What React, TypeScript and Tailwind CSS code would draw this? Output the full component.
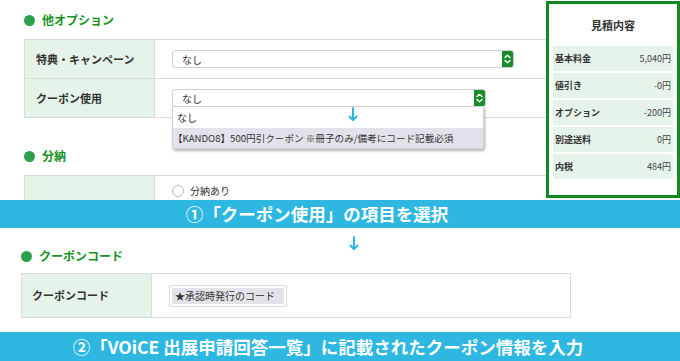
import React from "react";

const jp = { fontFamily: '"Noto Sans CJK JP", "Noto Sans", sans-serif' };

const Heading = ({ title }: { title: string }) => (
    <div className="flex items-center h-[12px] gap-[7px]">
        <span className="w-[11px] h-[11px] rounded-full bg-[#2f9e4c]" />
        <span className="text-[12px] font-bold text-[#17921f] leading-none">{title}</span>
    </div>
);

const Chevrons = () => (
    <svg width="7" height="10" viewBox="0 0 7 10" fill="none" stroke="white" strokeWidth="1.4" strokeLinecap="round" strokeLinejoin="round">
        <polyline points="1,3.5 3.5,1.2 6,3.5" />
        <polyline points="1,6.5 3.5,8.8 6,6.5" />
    </svg>
);

const Select = ({ width }: { width: string }) => (
    <div className={`${width} h-[18px] rounded-[3px] border border-[#cfcfcf] bg-white flex items-center justify-between overflow-hidden`}>
        <span className="pl-[9px] text-[10px] text-[#333]">なし</span>
        <span className="w-[11px] h-full bg-[#1a8c2b] flex items-center justify-center">
            <Chevrons />
        </span>
    </div>
);

const DownArrow = () => (
    <svg width="10" height="15" viewBox="0 0 10 15" fill="none" stroke="#29b6e3" strokeWidth="2" strokeLinecap="round" strokeLinejoin="round">
        <line x1="5" y1="1" x2="5" y2="13" />
        <polyline points="1.5,9.5 5,13 8.5,9.5" />
    </svg>
);

const Row = ({ label, children, top }: { label: string; children?: React.ReactNode; top?: boolean }) => (
    <div className="flex h-[39px] border-b border-[#dcdcdc]">
        <div className="w-[130px] shrink-0 bg-[#e5f3e9] border-r border-[#dcdcdc] flex items-center pl-[11px] text-[11px] font-bold text-[#333]">
            {label}
        </div>
        <div className={`flex-1 flex pl-[17px] ${top ? "items-start pt-[8px]" : "items-center"}`}>{children}</div>
    </div>
);

const estimate = [
    ["基本料金", "5,040円"],
    ["値引き", "-0円"],
    ["オプション", "-200円"],
    ["別途送料", "0円"],
    ["内税", "484円"],
];

export default function App() {
    return (
        <div className="w-[680px] h-[361px] bg-white overflow-hidden relative" style={jp}>
            <div className="flex h-[200px] overflow-hidden">
                <div className="flex-1 pl-[24px] pt-[14px]">
                    <Heading title="他オプション" />
                    <div className="mt-[13px] border-t border-l border-[#dcdcdc]">
                        <Row label="特典・キャンペーン">
                            <Select width="w-[342px]" />
                        </Row>
                        <Row label="クーポン使用">
                            <Select width="w-[314px]" />
                        </Row>
                    </div>
                    <div className="mt-[32px]">
                        <Heading title="分納" />
                    </div>
                    <div className="mt-[13px] border-t border-l border-[#dcdcdc]">
                        <Row label="" top>
                            <div className="flex items-center gap-[6px]">
                                <span className="w-[12px] h-[12px] rounded-full border border-[#bbb] bg-white" />
                                <span className="text-[10px] leading-[14px] text-[#333]">分納あり</span>
                            </div>
                        </Row>
                    </div>
                </div>
                <div className="w-[134px] h-[197px] mt-[1px] border-[3px] border-[#0e8a1f] bg-white px-[4px]">
                    <div className="h-[42px] flex items-center justify-center text-[11px] font-bold text-[#333]">見積内容</div>
                    <div className="flex flex-col gap-[2px]">
                        {estimate.map(([k, v]) => (
                            <div key={k} className="h-[25px] bg-[#e6f3ea] flex items-center justify-between px-[2px]">
                                <span className="text-[9px] font-bold text-[#333]">{k}</span>
                                <span className="text-[9px] text-[#444]">{v}</span>
                            </div>
                        ))}
                    </div>
                </div>
            </div>

            <div className="h-[28px] bg-[#2db7e1] flex items-center justify-center pr-[46px] text-white text-[17.5px] font-bold">
                ①「クーポン使用」の項目を選択
            </div>

            <div className="pl-[21px] pt-[22px] w-[571px]">
                <Heading title="クーポンコード" />
                <div className="mt-[11px] flex h-[45px] border border-[#dcdcdc]">
                    <div className="w-[130px] shrink-0 bg-[#e5f3e9] border-r border-[#dcdcdc] flex items-center pl-[10px] text-[11px] font-bold text-[#333]">
                        クーポンコード
                    </div>
                    <div className="flex-1 flex items-center pl-[17px]">
                        <div className="w-[118px] h-[22px] border border-[#dcdcdc] p-[2px]">
                            <div className="h-full bg-[#e3e2ea] flex items-center pl-[3px] text-[10px] text-[#333]">★承認時発行のコード</div>
                        </div>
                    </div>
                </div>
            </div>

            <div className="mt-[14px] h-[30px] bg-[#2db7e1] flex items-center justify-center pr-[24px] text-white text-[17.5px] font-bold">
                ②「VOiCE 出展申請回答一覧」に記載されたクーポン情報を入力
            </div>

            {/* open dropdown of the coupon select */}
            <div className="absolute left-[172px] top-[106px] w-[312px] bg-white border border-[#d0d0d0] rounded-b-[3px] shadow-[1px_2px_3px_rgba(0,0,0,0.3)] text-[10px] text-[#333]">
                <div className="h-[21px] flex items-center pl-[4px]">なし</div>
                <div className="h-[20px] bg-[#e3e2ea] flex items-center whitespace-nowrap text-[9.6px]">【KANDO8】500円引クーポン ※冊子のみ/備考にコード記載必須</div>
            </div>
            <div className="absolute left-[348px] top-[107px]">
                <DownArrow />
            </div>
            <div className="absolute left-[349px] top-[236px]">
                <DownArrow />
            </div>
        </div>
    );
}
